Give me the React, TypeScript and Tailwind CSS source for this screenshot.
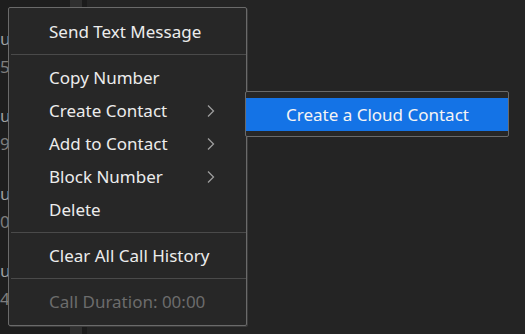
import React from "react";

const rows = [
  { top: "u", bottom: "5" },
  { top: "u", bottom: "9" },
  { top: "u", bottom: "0" },
  { top: "u", bottom: "4" },
];

function Chevron() {
  return (
    <svg width="9" height="14" viewBox="0 0 9 14" fill="none" className="text-[#9d9d9d]">
      <polyline points="2,1.5 7.5,7 2,12.5" stroke="currentColor" strokeWidth="1.3" />
    </svg>
  );
}

function Item({ label, sub, disabled }: { label: string; sub?: boolean; disabled?: boolean }) {
  return (
    <div className="h-[33px] flex items-center pl-[40px] pr-[31px] justify-between">
      <span className={disabled ? "text-[#6c6c6c]" : "text-[#ececec]"}>{label}</span>
      {sub && <Chevron />}
    </div>
  );
}

function Separator() {
  return <div className="my-[6px] ml-[2px] h-px bg-[#4a4a4a]" />;
}

export default function App() {
  return (
    <div
      className="relative w-[525px] h-[334px] overflow-hidden bg-[#242424] flex"
      style={{ fontFamily: '"Noto Sans", "Open Sans", sans-serif' }}
    >
      <div className="w-[70px] bg-[#1e1e1e] flex flex-col pt-[25px]">
        {rows.map((r, i) => (
          <div key={i} className="h-[85px] flex flex-col text-[17px] leading-[28px]">
            <span className="text-[#a0a0a0]">{r.top}</span>
            <span className="text-[#7e7e7e]">{r.bottom}</span>
          </div>
        ))}
      </div>
      <div className="w-[12px] bg-[#2f2f2f]" />
      <div className="w-[5px] bg-[#1b1b1b]" />
      <div className="flex-1" />

      <div className="absolute left-[8px] top-[7px] w-[239px] bg-[#272727] border border-[#6a6a6a] rounded-[2px] pt-[7px] pb-[7px] text-[17px] shadow-[1px_1px_0_#3a3a3a]">
        <Item label="Send Text Message" />
        <Separator />
        <Item label="Copy Number" />
        <Item label="Create Contact" sub />
        <Item label="Add to Contact" sub />
        <Item label="Block Number" sub />
        <Item label="Delete" />
        <Separator />
        <Item label="Clear All Call History" />
        <Separator />
        <Item label="Call Duration: 00:00" disabled />
      </div>

      <div className="absolute left-[245px] top-[91px] w-[264px] bg-[#272727] border border-[#6a6a6a] rounded-[2px] pt-[6px] pb-[5px] text-[17px]">
        <div className="h-[33px] bg-[#1473e6] flex items-center pl-[40px] text-[#f4f4f4]">
          Create a Cloud Contact
        </div>
      </div>
    </div>
  );
}
